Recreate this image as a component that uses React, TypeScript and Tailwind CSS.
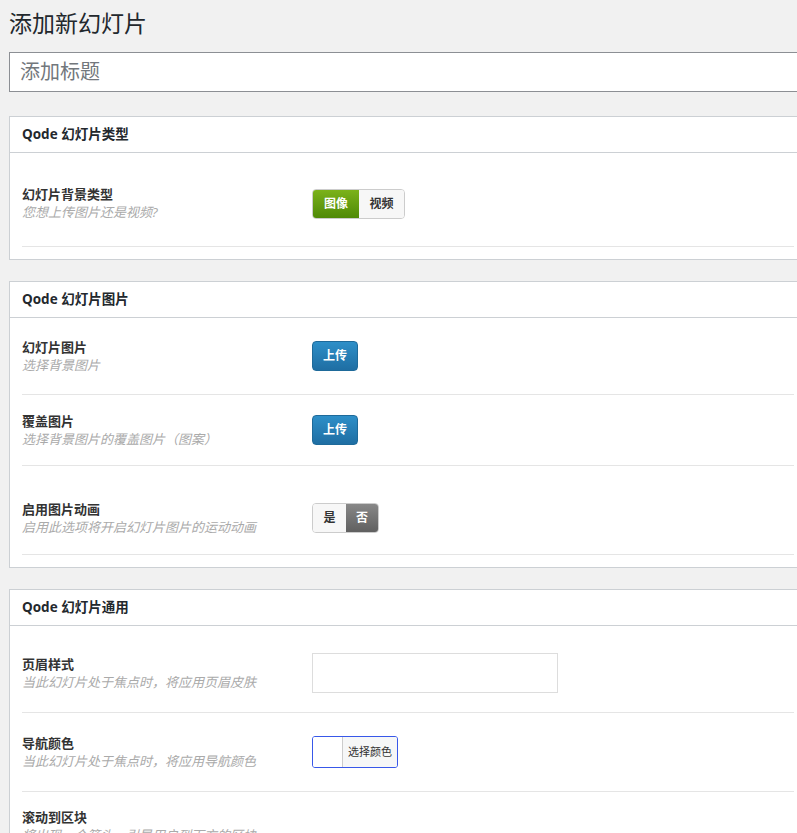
const font = { fontFamily: '"Open Sans", "Noto Sans CJK SC", sans-serif' };

function Row({ label, desc, children, last, h }: { label: string; desc: string; children?: React.ReactNode; last?: boolean; h: string }) {
  return (
    <div className={`flex items-center ${h} ${last ? '' : 'border-b border-[#e5e5e5]'}`}>
      <div className="w-[290px] shrink-0">
        <div className="text-[13px] font-bold text-[#333] leading-[18px]">{label}</div>
        <div className="text-[13px] italic text-[#aaa] leading-[19px]">{desc}</div>
      </div>
      <div>{children}</div>
    </div>
  );
}

function Panel({ title, children, className = '' }: { title: string; children: React.ReactNode; className?: string }) {
  return (
    <div className={`bg-white border border-[#ccd0d4] w-[830px] ${className}`}>
      <div className="h-[36px] flex items-center px-3 border-b border-[#ccd0d4] text-[13.5px] font-bold text-[#23282d]">{title}</div>
      <div className="mx-3 pr-8">{children}</div>
    </div>
  );
}

function Upload() {
  return (
    <button className="h-[30px] w-[46px] rounded-[4px] border border-[#1e6a9a] bg-gradient-to-b from-[#2e8fc8] to-[#1f6ea3] text-white text-[12px] font-bold">上传</button>
  );
}

export default function App() {
  return (
    <div className="w-[797px] h-[833px] overflow-hidden bg-[#f1f1f1] pl-[9px] pt-[8px]" style={font}>
      <h1 className="text-[23px] text-[#23282d] leading-[30px]">添加新幻灯片</h1>
      <div className="mt-[14px] h-[40px] w-[830px] border border-[#8c8f94] bg-white flex items-center px-[10px] text-[20px] text-[#72777c]">添加标题</div>

      <Panel title="Qode 幻灯片类型" className="mt-[24px]">
        <div className="pt-[8px]">
          <Row label="幻灯片背景类型" desc="您想上传图片还是视频?" h="h-[86px]">
            <div className="flex h-[30px] rounded-[4px] overflow-hidden border border-[#ccc] text-[12px] font-bold">
              <span className="w-[46px] flex items-center justify-center text-white bg-gradient-to-b from-[#7bb21a] to-[#4f8a07]">图像</span>
              <span className="w-[45px] flex items-center justify-center text-[#333] bg-[#f7f7f7]">视频</span>
            </div>
          </Row>
        </div>
        <div className="h-[12px]" />
      </Panel>

      <Panel title="Qode 幻灯片图片" className="mt-[21px]">
        <Row label="幻灯片图片" desc="选择背景图片" h="h-[77px]"><Upload /></Row>
        <Row label="覆盖图片" desc="选择背景图片的覆盖图片（图案）" h="h-[71px]"><Upload /></Row>
        <div className="pt-[16px]">
          <Row label="启用图片动画" desc="启用此选项将开启幻灯片图片的运动动画" h="h-[73px]">
            <div className="flex h-[30px] rounded-[4px] overflow-hidden border border-[#ccc] text-[12px] font-bold">
              <span className="w-[33px] flex items-center justify-center text-[#333] bg-[#f7f7f7]">是</span>
              <span className="w-[32px] flex items-center justify-center text-white bg-gradient-to-b from-[#888] to-[#606060]">否</span>
            </div>
          </Row>
        </div>
        <div className="h-[12px]" />
      </Panel>

      <Panel title="Qode 幻灯片通用" className="mt-[21px]">
        <div className="pt-[8px]">
          <Row label="页眉样式" desc="当此幻灯片处于焦点时，将应用页眉皮肤" h="h-[79px]">
            <div className="w-[246px] h-[40px] border border-[#ddd] bg-white" />
          </Row>
        </div>
        <Row label="导航颜色" desc="当此幻灯片处于焦点时，将应用导航颜色" h="h-[79px]">
          <div className="flex h-[32px] border border-[#3858e9] rounded-[3px] overflow-hidden">
            <span className="w-[30px] bg-white border-r border-[#ccc]" />
            <span className="px-[5px] flex items-center text-[11px] text-[#333] bg-[#f6f7f7]">选择颜色</span>
          </div>
        </Row>
        <div className="pt-[16px]">
          <div className="text-[13px] font-bold text-[#333] leading-[18px]">滚动到区块</div>
          <div className="flex">
            <div className="w-[290px] text-[13px] italic text-[#aaa] leading-[19px]">将出现一个箭头，引导用户到下方的区块</div>
            <div className="w-[400px] h-[40px] border border-[#ddd] mt-[8px]" />
          </div>
        </div>
      </Panel>
    </div>
  );
}
